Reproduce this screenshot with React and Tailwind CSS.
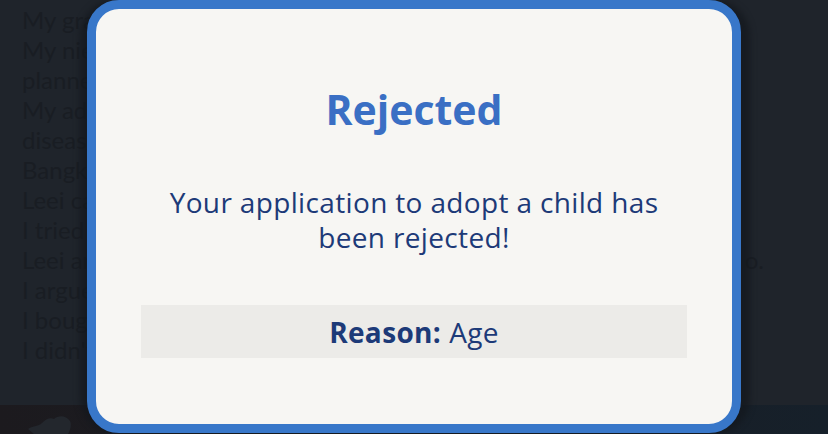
import React from 'react';

const LINES = [
  'My grandmother taught me how to knit a scarf.',
  'My nieces and I spent the day planning a trip.',
  'planned a party for the whole family.',
  'My adopted dog was diagnosed with a',
  'disease and needs treatment.',
  'Bangkok was a wonderful place to visit.',
  'Leei called me to talk about work.',
  'I tried to learn a new language.',
  'Leei and I went out for dinner together.',
  'I argued with my neighbor about noise.',
  'I bought a new car from the dealership.',
  'I didn\'t get the promotion at work.',
];

function Background() {
  return (
    <div className="absolute inset-0 bg-[#1f242b]">
      <div className="pt-[5px] pl-[22px] text-[24px] leading-[30px] text-[#191d23] font-['Lato',sans-serif]">
        {LINES.map((line, i) => (
          <div key={i} className="flex justify-between pr-[64px] whitespace-nowrap">
            <span>{line}</span>
            {i === 8 && <span>o.</span>}
          </div>
        ))}
      </div>
      <div className="absolute left-0 right-0 bottom-0 h-[29px] bg-gradient-to-r from-[#1c1a1e] to-[#16202a]">
        <svg className="absolute left-[24px] top-[8px]" width="52" height="21" viewBox="0 0 52 21" fill="none">
          <path d="M4 16 C10 12 14 14 18 10 C22 6 26 4 30 6 C34 2 42 2 46 8 C48 12 46 18 44 21 L10 21 Z" fill="#23272d" />
        </svg>
      </div>
    </div>
  );
}

export default function App() {
  return (
    <div className="relative w-[828px] h-[434px] overflow-hidden">
      <Background />
      <div className="absolute left-[80px] top-0 w-[670px] h-[434px] bg-[#13171c]/70 rounded-[36px] blur-[3px]" />
      <div className="absolute left-[87px] top-0 w-[654px] h-[433px] rounded-[32px] border-[9px] border-[#3877c9] bg-[#f7f6f3] flex flex-col items-center font-['Open_Sans',sans-serif]">
        <h1 className="mt-[75px] text-[41px] leading-[50px] font-bold text-[#3a6fc4]">Rejected</h1>
        <p className="mt-[51px] text-center text-[28px] leading-[35px] tracking-[0.35px] text-[#1d3a78] whitespace-nowrap">
          Your application to adopt a child has
          <br />
          been rejected!
        </p>
        <div className="mt-[50px] w-[546px] h-[53px] bg-[#ecebe8] flex items-center justify-center text-[28px] tracking-[0.35px] text-[#1d3a78]">
          <span className="font-bold">Reason:</span>
          <span className="ml-[8px]">Age</span>
        </div>
      </div>
    </div>
  );
}
